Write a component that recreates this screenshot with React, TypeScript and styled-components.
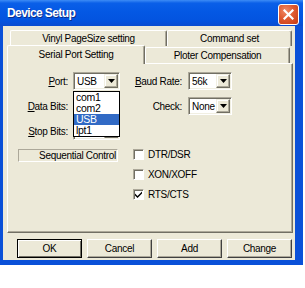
import React from 'react'
import styled, { createGlobalStyle } from 'styled-components'

const uiFont = `"Liberation Sans", Arial, sans-serif`

const GlobalStyle = createGlobalStyle`
  html, body {
    margin: 0;
    padding: 0;
    background: #ffffff;
  }
  body {
    font-family: ${uiFont};
    font-size: 10px;
    letter-spacing: -0.3px;
    color: #000000;
  }
`

const Window = styled.div`
  width: 303px;
  display: flex;
  flex-direction: column;
  background: #0a50d8;
`

const TitleBar = styled.div`
  height: 26px;
  display: flex;
  align-items: center;
  justify-content: space-between;
  padding: 0 4px 0 7px;
  background: linear-gradient(#3d8cf6 0%, #0a5fe8 12%, #0458e4 45%, #0353df 80%, #0a4cd0 100%);
`

const Title = styled.span`
  font-family: ${uiFont};
  font-weight: bold;
  font-size: 12px;
  letter-spacing: -0.6px;
  color: #ffffff;
  text-shadow: 1px 1px 0 #0a2e8a;
`

const CloseButton = styled.div`
  width: 19px;
  height: 19px;
  border: 1px solid #ffffff;
  border-radius: 3px;
  background: radial-gradient(circle at 35% 30%, #f08a66 0%, #e05a30 45%, #c33a14 100%);
  display: flex;
  align-items: center;
  justify-content: center;
  margin-top: 2px;
`

const Body = styled.div`
  margin: 0 8px 5px 3px;
  height: 234px;
  background: #ece9d8;
  padding-top: 4px;
  box-sizing: border-box;
`

const Tabs = styled.div`
  margin-left: 4px;
  width: 286px;
`

const TabRow = styled.div<{ $indent: number }>`
  display: flex;
  align-items: flex-end;
  height: ${p => (p.$indent ? 16 : 17)}px;
  padding-left: ${p => p.$indent}px;
`

const Tab = styled.div<{ $w: number; $active?: boolean }>`
  position: relative;
  z-index: ${p => (p.$active ? 2 : 1)};
  box-sizing: border-box;
  width: ${p => p.$w}px;
  height: ${p => (p.$active ? 19 : 16)}px;
  margin-bottom: ${p => (p.$active ? -1 : 0)}px;
  background: #ece9d8;
  border-top: 1px solid #ffffff;
  border-left: 1px solid #ffffff;
  border-right: 1px solid #716f64;
  border-top-left-radius: 2px;
  border-top-right-radius: 2px;
  box-shadow: inset -1px 0 0 #aca899;
  display: flex;
  align-items: center;
  justify-content: center;
  padding-bottom: ${p => (p.$active ? 2 : 0)}px;
  white-space: nowrap;
`

const Panel = styled.div`
  position: relative;
  box-sizing: border-box;
  height: 170px;
  border: 1px solid;
  border-color: #ffffff #716f64 #716f64 #ffffff;
  box-shadow: inset -1px -1px 0 #aca899;
  padding-top: 8px;
  display: flex;
  flex-direction: column;
  gap: 7px;
`

const FieldRow = styled.div`
  display: flex;
  align-items: center;
  height: 18px;
`

const Label = styled.span<{ $w: number; $ml?: number }>`
  width: ${p => p.$w}px;
  margin-left: ${p => p.$ml ?? 0}px;
  margin-right: ${p => (p.$ml ? 6 : 5)}px;
  text-align: right;
  white-space: nowrap;
`

const Key = styled.span`
  text-decoration: underline;
`

const Combo = styled.div<{ $w: number }>`
  box-sizing: border-box;
  width: ${p => p.$w}px;
  height: 18px;
  background: #ffffff;
  border: 1px solid;
  border-color: #aca899 #ffffff #ffffff #aca899;
  box-shadow: inset 1px 1px 0 #716f64, inset -1px -1px 0 #f1efe2;
  display: flex;
  align-items: center;
  padding: 1px 1px 1px 3px;
`

const ComboText = styled.span`
  flex: 1;
  white-space: nowrap;
  overflow: hidden;
`

const ComboArrow = styled.div`
  box-sizing: border-box;
  flex: none;
  width: 14px;
  height: 14px;
  background: #ece9d8;
  border: 1px solid;
  border-color: #f1efe2 #716f64 #716f64 #f1efe2;
  box-shadow: inset -1px -1px 0 #aca899, inset 1px 1px 0 #ffffff;
  display: flex;
  align-items: center;
  justify-content: center;
`

const DropList = styled.div`
  position: absolute;
  left: 65px;
  top: 27px;
  width: 47px;
  height: 46px;
  box-sizing: border-box;
  border: 1px solid #000000;
  background: #ffffff;
  z-index: 5;
`

const DropItem = styled.div<{ $selected?: boolean }>`
  height: 11px;
  line-height: 11px;
  padding-left: 2px;
  font-size: 10.5px;
  background: ${p => (p.$selected ? '#316ac5' : '#ffffff')};
  color: ${p => (p.$selected ? '#ffffff' : '#000000')};
`

const Lower = styled.div`
  display: flex;
  align-items: flex-start;
  margin-top: 1px;
`

const StaticBox = styled.div`
  box-sizing: border-box;
  width: 100px;
  height: 13px;
  margin: 1px 0 0 10px;
  border: 1px solid;
  border-color: #aca899 #ffffff #ffffff #aca899;
  display: flex;
  align-items: center;
  justify-content: flex-end;
  padding-right: 1px;
  line-height: 11px;
  white-space: nowrap;
`

const Checks = styled.div`
  display: flex;
  flex-direction: column;
  gap: 7px;
  margin-left: 15px;
`

const CheckRow = styled.label`
  display: flex;
  align-items: center;
  height: 13px;
  gap: 4px;
`

const Box = styled.span`
  box-sizing: border-box;
  width: 11px;
  height: 11px;
  background: #ffffff;
  border: 1px solid;
  border-color: #aca899 #ffffff #ffffff #aca899;
  box-shadow: inset 1px 1px 0 #716f64;
  display: flex;
  align-items: center;
  justify-content: center;
`

const ButtonBar = styled.div`
  display: flex;
  gap: 5px;
  margin: 6px 0 0 14px;
`

const Button = styled.div<{ $default?: boolean }>`
  box-sizing: border-box;
  width: 65px;
  height: 19px;
  background: #ece9d8;
  border: 1px solid;
  border-color: ${p => (p.$default ? '#000000' : '#ffffff #404040 #404040 #ffffff')};
  box-shadow: ${p =>
    p.$default
      ? 'inset 1px 1px 0 #ffffff, inset -1px -1px 0 #716f64'
      : 'inset -1px -1px 0 #aca899'};
  display: flex;
  align-items: center;
  justify-content: center;
`

const Arrow = () => (
  <svg width="7" height="4" viewBox="0 0 7 4">
    <path d="M0 0h7L3.5 4z" fill="#000" />
  </svg>
)

const ComboBox = ({ value, w }: { value?: string; w: number }) => (
  <Combo $w={w}>
    <ComboText>{value}</ComboText>
    <ComboArrow>
      <Arrow />
    </ComboArrow>
  </Combo>
)

const CheckBox = ({ label, checked }: { label: string; checked?: boolean }) => (
  <CheckRow>
    <Box>
      {checked && (
        <svg width="7" height="7" viewBox="0 0 7 7">
          <path d="M0 2.5l2.5 2.5L7 0.5v2L2.5 7 0 4.5z" fill="#000" />
        </svg>
      )}
    </Box>
    {label}
  </CheckRow>
)

export default function App() {
  return (
    <>
      <GlobalStyle />
      <Window>
        <TitleBar>
          <Title>Device Setup</Title>
          <CloseButton>
            <svg width="11" height="11" viewBox="0 0 11 11">
              <path d="M1.5 1.5l8 8M9.5 1.5l-8 8" stroke="#fff" strokeWidth="2.2" strokeLinecap="square" />
            </svg>
          </CloseButton>
        </TitleBar>
        <Body>
          <Tabs>
            <TabRow $indent={3}>
              <Tab $w={157}>Vinyl PageSize setting</Tab>
              <Tab $w={125}>Command set</Tab>
            </TabRow>
            <TabRow $indent={0}>
              <Tab $w={138} $active>Serial Port Setting</Tab>
              <Tab $w={145}>Ploter Compensation</Tab>
            </TabRow>
            <Panel>
              <FieldRow>
                <Label $w={60}><Key>P</Key>ort:</Label>
                <ComboBox value="USB" w={47} />
                <Label $w={49} $ml={13}><Key>B</Key>aud Rate:</Label>
                <ComboBox value="56k" w={44} />
              </FieldRow>
              <FieldRow>
                <Label $w={60}><Key>D</Key>ata Bits:</Label>
                <ComboBox w={47} />
                <Label $w={49} $ml={13}>Check:</Label>
                <ComboBox value="None" w={44} />
              </FieldRow>
              <FieldRow>
                <Label $w={60}><Key>S</Key>top Bits:</Label>
                <ComboBox w={47} />
              </FieldRow>
              <Lower>
                <StaticBox>Sequential Control</StaticBox>
                <Checks>
                  <CheckBox label="DTR/DSR" />
                  <CheckBox label="XON/XOFF" />
                  <CheckBox label="RTS/CTS" checked />
                </Checks>
              </Lower>
              <DropList>
                <DropItem>com1</DropItem>
                <DropItem>com2</DropItem>
                <DropItem $selected>USB</DropItem>
                <DropItem>lpt1</DropItem>
              </DropList>
            </Panel>
          </Tabs>
          <ButtonBar>
            <Button $default>OK</Button>
            <Button>Cancel</Button>
            <Button>Add</Button>
            <Button>Change</Button>
          </ButtonBar>
        </Body>
      </Window>
    </>
  )
}
